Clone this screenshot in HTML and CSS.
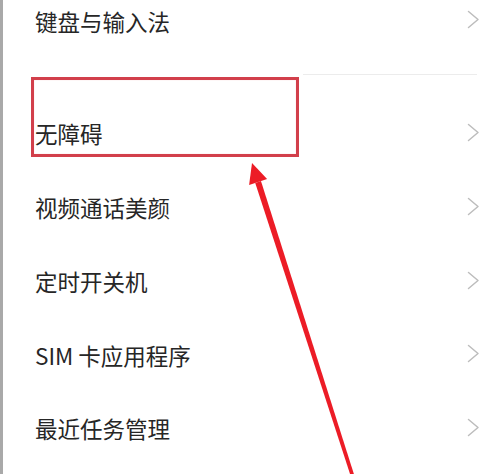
FILE: index.html
```html
<!DOCTYPE html>
<html lang="zh-CN">
<head>
<meta charset="utf-8">
<title>设置</title>
<link rel="stylesheet" href="styles.css">
</head>
<body>
<div class="screen">
  <ul class="list list-top">
    <li class="row">
      <span class="label">键盘与输入法</span>
      <svg class="chev" viewBox="0 0 13 19" width="13" height="19"><polyline points="1.5,1.5 11,9.5 1.5,17.5"/></svg>
    </li>
  </ul>
  <div class="divider"></div>
  <ul class="list">
    <li class="row">
      <span class="label">无障碍</span>
      <svg class="chev" viewBox="0 0 13 19" width="13" height="19"><polyline points="1.5,1.5 11,9.5 1.5,17.5"/></svg>
    </li>
    <li class="row">
      <span class="label">视频通话美颜</span>
      <svg class="chev" viewBox="0 0 13 19" width="13" height="19"><polyline points="1.5,1.5 11,9.5 1.5,17.5"/></svg>
    </li>
    <li class="row">
      <span class="label">定时开关机</span>
      <svg class="chev" viewBox="0 0 13 19" width="13" height="19"><polyline points="1.5,1.5 11,9.5 1.5,17.5"/></svg>
    </li>
    <li class="row">
      <span class="label">SIM 卡应用程序</span>
      <svg class="chev" viewBox="0 0 13 19" width="13" height="19"><polyline points="1.5,1.5 11,9.5 1.5,17.5"/></svg>
    </li>
    <li class="row">
      <span class="label">最近任务管理</span>
      <svg class="chev" viewBox="0 0 13 19" width="13" height="19"><polyline points="1.5,1.5 11,9.5 1.5,17.5"/></svg>
    </li>
  </ul>
  <div class="highlight"></div>
  <svg class="arrow" viewBox="0 0 500 474" width="500" height="474">
    <polygon class="arrow-shaft" points="260.96,181.08 355.6,479.4 352.2,480.6 255.24,182.92"/>
    <polygon class="arrow-head" points="252,163 267.1,179.1 249.1,184.9"/>
  </svg>
</div>
</body>
</html>
```

FILE: styles.css
```css
html, body {
  margin: 0;
  padding: 0;
  background: #ffffff;
}

.screen {
  position: relative;
  width: 497px;
  height: 474px;
  overflow: hidden;
  border-left: 3px solid #a9a9a9;
  background: #ffffff;
  font-family: "Noto Sans CJK SC", "Noto Sans", sans-serif;
}

.list {
  list-style: none;
  margin: 0;
  padding: 0;
}

.list-top {
  margin-top: -16px;
}

.row {
  display: flex;
  align-items: center;
  justify-content: space-between;
  height: 73.75px;
  padding: 0 20px 0 32px;
}

.label {
  font-size: 22.5px;
  line-height: 1;
  color: #262626;
}

.chev {
  display: block;
  fill: none;
  stroke: #bdbdbd;
  stroke-width: 1.5;
  stroke-linecap: round;
  stroke-linejoin: round;
  position: relative;
  top: -1px;
}

.divider {
  height: 1px;
  margin: 16px 23px 22px 29px;
  background: #ececec;
}

.highlight {
  position: absolute;
  left: 28px;
  top: 77px;
  width: 268px;
  height: 80px;
  box-sizing: border-box;
  border: 3px solid #d23f4b;
  box-shadow: 0 0 0 4px #ffffff, inset 0 0 1px rgba(230, 120, 130, 0.6);
}

.arrow {
  position: absolute;
  left: -3px;
  top: 0;
  display: block;
}

.arrow-shaft,
.arrow-head {
  fill: #ec1c26;
}
```
